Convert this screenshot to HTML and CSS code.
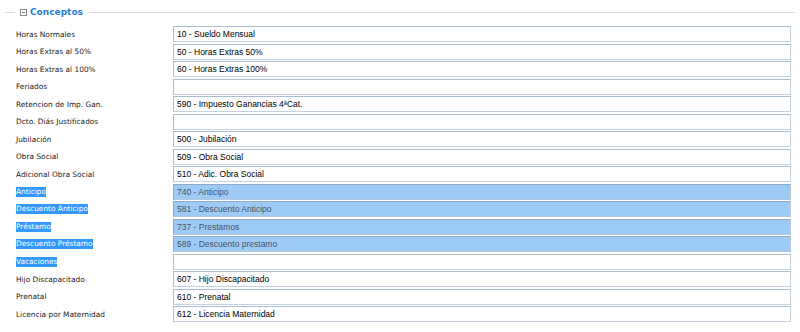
FILE: index.html
```html
<!DOCTYPE html>
<html lang="es">
<head>
<meta charset="utf-8">
<title>Conceptos</title>
<link rel="stylesheet" href="styles.css">
</head>
<body>
<section class="panel">
  <div class="panel-head">
    <span class="line line-start"></span>
    <span class="toggle"></span>
    <span class="title">Conceptos</span>
    <span class="line line-end"></span>
  </div>
  <div class="rows">
    <label class="lbl">Horas Normales</label><div class="field">10 - Sueldo Mensual</div>
    <label class="lbl">Horas Extras al 50%</label><div class="field">50 - Horas Extras 50%</div>
    <label class="lbl">Horas Extras al 100%</label><div class="field">60 - Horas Extras 100%</div>
    <label class="lbl">Feriados</label><div class="field"></div>
    <label class="lbl">Retencion de Imp. Gan.</label><div class="field">590 - Impuesto Ganancias 4ªCat.</div>
    <label class="lbl">Dcto. Diás Justificados</label><div class="field"></div>
    <label class="lbl">Jubilación</label><div class="field">500 - Jubilación</div>
    <label class="lbl">Obra Social</label><div class="field">509 - Obra Social</div>
    <label class="lbl">Adicional Obra Social</label><div class="field">510 - Adic. Obra Social</div>
    <label class="lbl"><span class="sel">Anticipo</span></label><div class="field hl">740 - Anticipo</div>
    <label class="lbl"><span class="sel">Descuento Anticipo</span></label><div class="field hl">581 - Descuento Anticipo</div>
    <label class="lbl"><span class="sel">Préstamo</span></label><div class="field hl">737 - Prestamos</div>
    <label class="lbl"><span class="sel">Descuento Préstamo</span></label><div class="field hl">589 - Descuento prestamo</div>
    <label class="lbl"><span class="sel">Vacaciones</span></label><div class="field"></div>
    <label class="lbl">Hijo Discapacitado</label><div class="field">607 - Hijo Discapacitado</div>
    <label class="lbl">Prenatal</label><div class="field">610 - Prenatal</div>
    <label class="lbl">Licencia por Maternidad</label><div class="field">612 - Licencia Maternidad</div>
  </div>
</section>
</body>
</html>
```
FILE: styles.css
```css
html, body {
  margin: 0;
  padding: 0;
  background: #ffffff;
}

.panel {
  width: 800px;
}

.panel-head {
  display: flex;
  align-items: center;
  height: 24px;
  padding: 0 5px;
}

.line {
  height: 0;
  border-top: 1px solid #d6dfea;
}

.line-start {
  width: 10px;
}

.line-end {
  flex: 1;
  margin-left: 6px;
}

.toggle {
  position: relative;
  width: 5px;
  height: 5px;
  border: 1px solid #8c8c8c;
  margin-left: 5px;
  margin-right: 3px;
  margin-top: 1px;
}

.toggle::after {
  content: "";
  position: absolute;
  left: 1px;
  top: 2px;
  width: 3px;
  height: 1px;
  background: #707070;
}

.title {
  font-family: "DejaVu Sans", sans-serif;
  font-weight: bold;
  font-size: 9px;
  color: #2a7ccf;
}

.rows {
  display: grid;
  grid-template-columns: 157px 618px;
  grid-auto-rows: 16px;
  row-gap: 1.5px;
  padding-left: 16px;
  margin-top: 2px;
}

.lbl {
  display: flex;
  align-items: center;
  font-family: "DejaVu Sans", sans-serif;
  font-size: 7.4px;
  color: #1a1a1a;
  white-space: nowrap;
}

.sel {
  background: #3399ff;
  color: #ffffff;
  line-height: 10px;
}

.field {
  box-sizing: border-box;
  height: 16px;
  border: 1px solid #a9bdd0;
  border-right-color: #c4d2df;
  border-bottom-color: #c4d2df;
  background: #ffffff;
  padding: 0 3px;
  font-family: "Liberation Sans", Arial, sans-serif;
  font-size: 8.5px;
  line-height: 14px;
  color: #000000;
  white-space: nowrap;
}

.field.hl {
  background: #9dcbf6;
  color: #46546a;
  border-color: #8eaac4;
  border-right-color: #b3c8dc;
  border-bottom-color: #b3c8dc;
}
```
